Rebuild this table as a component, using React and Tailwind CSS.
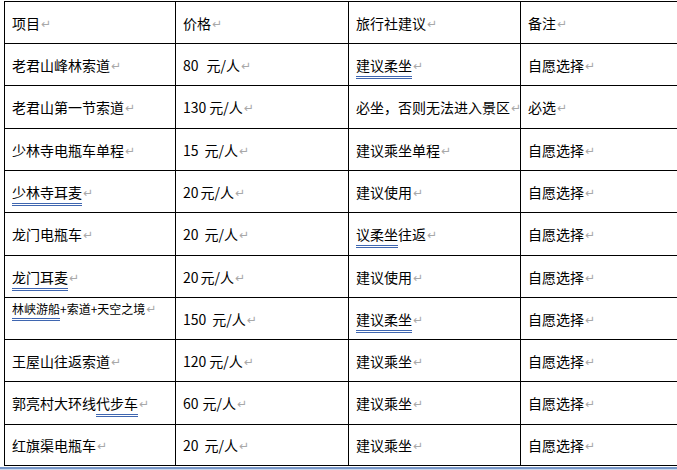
import React from "react";

function Mark() {
  return (
    <span className="ml-[1px] font-['DejaVu_Sans',sans-serif] text-[12px] text-[#a8a8a8] relative top-[-1px]">
      ↵
    </span>
  );
}

function U({ children }) {
  return (
    <span className="border-b-[3px] border-double border-[#3f66b0] pb-[1px]">
      {children}
    </span>
  );
}

function Price({ n, gap }) {
  return (
    <span>
      {n}
      <span className={gap}>元/人</span>
    </span>
  );
}

const rows = [
  { h: "h-[42px]", c: ["项目", "价格", "旅行社建议", "备注"] },
  { h: "h-[42px]", c: ["老君山峰林索道", <Price key="p" n="80" gap="ml-[8px]" />, <U key="u">建议柔坐</U>, "自愿选择"] },
  { h: "h-[43px]", c: ["老君山第一节索道", <Price key="p" n="130" gap="ml-[3px]" />, "必坐，否则无法进入景区", "必选"] },
  { h: "h-[42px]", c: ["少林寺电瓶车单程", <Price key="p" n="15" gap="ml-[6px]" />, "建议乘坐单程", "自愿选择"] },
  { h: "h-[42px]", c: [<U key="u">少林寺耳麦</U>, <Price key="p" n="20" gap="ml-[2px]" />, "建议使用", "自愿选择"] },
  { h: "h-[43px]", c: ["龙门电瓶车", <Price key="p" n="20" gap="ml-[6px]" />, <span key="s"><U>议柔坐</U>往返</span>, "自愿选择"] },
  { h: "h-[42px]", c: [<U key="u">龙门耳麦</U>, <Price key="p" n="20" gap="ml-[2px]" />, "建议使用", "自愿选择"] },
  { h: "h-[42px]", special: true, c: [<span key="s"><U>林峡游船</U>+索道+天空之境</span>, <Price key="p" n="150" gap="ml-[6px]" />, <U key="u">建议柔坐</U>, "自愿选择"] },
  { h: "h-[42px]", c: ["王屋山往返索道", <Price key="p" n="120" gap="ml-[3px]" />, "建议乘坐", "自愿选择"] },
  { h: "h-[43px]", c: [<span key="s">郭亮村大环线<U>代步车</U></span>, <Price key="p" n="60" gap="ml-[4px]" />, "建议乘坐", "自愿选择"] },
  { h: "h-[41px]", c: ["红旗渠电瓶车", <Price key="p" n="20" gap="ml-[6px]" />, "建议乘坐", "自愿选择"] },
];

const widths = ["w-[171px]", "w-[173px]", "w-[172px]", "w-[200px]"];

export default function App() {
  return (
    <div className="w-[677px] h-[470px] overflow-hidden bg-white text-black font-['Noto_Sans_CJK_SC',sans-serif] text-[14px]">
      <div className="pt-[1px] pl-[4px]">
        <div className="w-[717px] border-t border-l border-black">
          {rows.map((r, i) => (
            <div key={i} className={`flex border-b border-black ${r.h}`}>
              {r.c.map((cell, j) => {
                const special = r.special && j === 0;
                return (
                  <div
                    key={j}
                    className={
                      special
                        ? `${widths[j]} shrink-0 border-r border-black flex items-start pl-[7px] pt-[3px] text-[12px] leading-[16px]`
                        : `${widths[j]} shrink-0 border-r border-black flex items-center pl-[7px] pt-[2px] leading-[20px]`
                    }
                  >
                    <span className="whitespace-nowrap">
                      {cell}
                      <Mark />
                    </span>
                  </div>
                );
              })}
            </div>
          ))}
        </div>
      </div>
      <div className="mt-[1px] h-[2px] bg-[#7696c8]" />
      <div className="h-[2px] bg-[#cbd8ec]" />
    </div>
  );
}
